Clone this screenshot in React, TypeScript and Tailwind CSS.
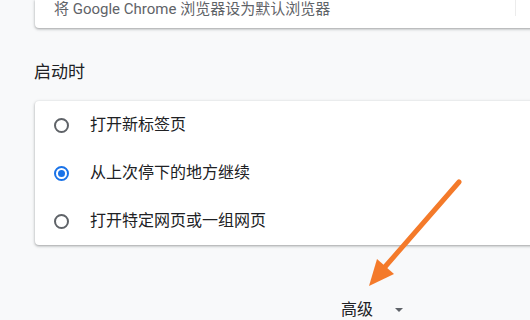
import React from 'react';

const OPTIONS = [
  { label: '打开新标签页', checked: false },
  { label: '从上次停下的地方继续', checked: true },
  { label: '打开特定网页或一组网页', checked: false },
];

const FONT = "font-['Roboto','Noto_Sans_CJK_SC',sans-serif]";

function Radio({ checked }: { checked: boolean }) {
  if (checked) {
    return (
      <div className="w-[15px] h-[15px] rounded-full border-2 border-[#1a73e8] flex items-center justify-center shrink-0">
        <div className="w-[7px] h-[7px] rounded-full bg-[#1a73e8]" />
      </div>
    );
  }
  return <div className="w-[15px] h-[15px] rounded-full border-2 border-[#5f6368] shrink-0" />;
}

export default function App() {
  return (
    <div className={`relative w-[530px] h-[320px] overflow-hidden bg-[#f8f9fa] ${FONT}`}>
      <div className="pl-[35px]">
        {/* default browser card (scrolled, only bottom visible) */}
        <div className="relative w-[520px] h-[28px] bg-white rounded-b-[4px] shadow-[0_1px_2px_rgba(60,64,67,0.3),0_1px_3px_1px_rgba(60,64,67,0.15)]">
          <p className="pl-[19px] text-[15px] leading-[18px] text-[#5f6368]">
            将 Google Chrome 浏览器设为默认浏览器
          </p>
          <div className="absolute left-[480px] top-0 h-[16px] w-px bg-[#ececec]" />
        </div>

        <h2 className="mt-[34px] -ml-px text-[17px] leading-[20px] text-[#202124]">启动时</h2>

        {/* startup options */}
        <div className="mt-[19px] w-[520px] bg-white rounded-[4px] shadow-[0_1px_2px_rgba(60,64,67,0.3),0_1px_3px_1px_rgba(60,64,67,0.15)]">
          {OPTIONS.map((opt) => (
            <div key={opt.label} className="h-[48px] flex items-center pl-[19px]">
              <Radio checked={opt.checked} />
              <span className="ml-[21px] text-[16px] text-[#202124]">{opt.label}</span>
            </div>
          ))}
        </div>

        <div className="mt-[55px] ml-[306px] flex items-center gap-[22px]">
          <span className="text-[16px] leading-[20px] text-[#202124]">高级</span>
          <span className="w-0 h-0 border-l-[4px] border-r-[4px] border-t-[4px] border-l-transparent border-r-transparent border-t-[#5f6368]" />
        </div>
      </div>

      {/* annotation arrow */}
      <svg className="absolute left-0 top-0 pointer-events-none" width="530" height="320" viewBox="0 0 530 320">
        <line x1="459" y1="182" x2="384" y2="268" stroke="#f47a2a" strokeWidth="5" strokeLinecap="round" />
        <polygon points="369,286 377,259 394,274" fill="#f47a2a" />
      </svg>
    </div>
  );
}
